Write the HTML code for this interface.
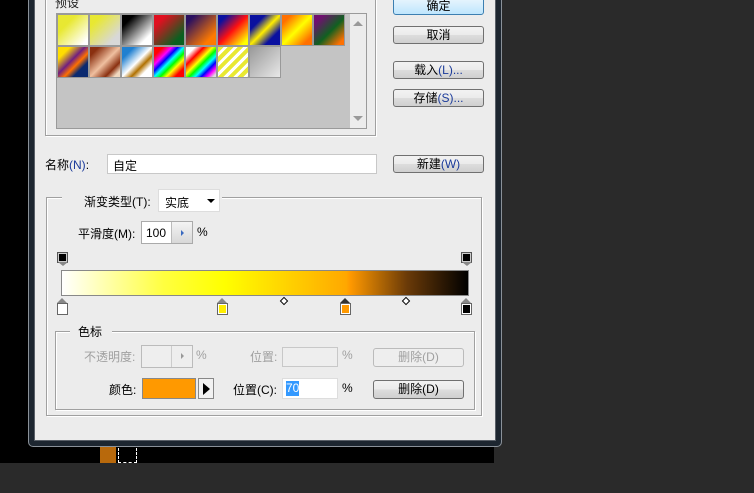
<!DOCTYPE html>
<html><head><meta charset="utf-8"><style>
*{box-sizing:border-box;margin:0;padding:0}
body{width:754px;height:493px;background:#2a2a2a;position:relative;overflow:hidden;font-family:"Liberation Sans","Noto Sans CJK SC",sans-serif;font-size:12px;color:#000}
.a{position:absolute}
.btn{position:absolute;left:393px;width:91px;height:18px;border:1px solid #707070;border-radius:3px;background:linear-gradient(#f2f2f2 0%,#ebebeb 50%,#dddddd 51%,#cfcfcf 100%);text-align:center;line-height:16px;font-size:12px}
.bl{color:#1a3a9a}
.fs{position:absolute;border:1px solid #a0a0a0;box-shadow:inset 1px 1px 0 #fff,1px 1px 0 #fff}
.sw{position:absolute;width:32px;height:32px;border:1px solid #999}
.inp{position:absolute;background:#fff;border:1px solid #c8c8c8}
.stop{position:absolute;width:11px}
</style></head><body>
<div class="a" style="left:0;top:0;width:28px;height:463px;background:#000"></div>
<div class="a" style="left:0;top:440px;width:494px;height:23px;background:#000"></div>
<div class="a" style="left:100px;top:446px;width:16px;height:17px;background:#b8690c"></div>
<div class="a" style="left:118px;top:448px;width:19px;height:15px;border:1px dashed #fff;border-top:none"></div>
<!-- dialog frame -->
<div class="a" style="left:28px;top:-5px;width:474px;height:452px;background:#1d2630;border-radius:0 0 5px 5px;border:1px solid #8a9199"></div>
<div class="a" style="left:34px;top:-5px;width:462px;height:446px;background:#ececec;border:1px solid #5a6068"></div>
<!-- preset fieldset -->
<div class="fs" style="left:45px;top:-5px;width:331px;height:141px"></div>
<div class="a" style="left:56px;top:13px;width:311px;height:116px;background:#c4c4c4;border:1px solid #9a9a9a"></div>
<div class="a" style="left:350px;top:14px;width:16px;height:114px;background:#ececec"></div>
<div class="a" style="left:353px;top:21px;width:0;height:0;border:5px solid transparent;border-bottom:5px solid #999;border-top:none"></div>
<div class="a" style="left:353px;top:116px;width:0;height:0;border:5px solid transparent;border-top:5px solid #999;border-bottom:none"></div>
<div class="sw" style="left:57px;top:14px;background:linear-gradient(135deg,#e8e832 30%,#fff 90%)"></div>
<div class="sw" style="left:89px;top:14px;background:linear-gradient(135deg,#e8e832 20%,#d8d8d8 80%)"></div>
<div class="sw" style="left:121px;top:14px;background:linear-gradient(135deg,#000 20%,#fff 80%)"></div>
<div class="sw" style="left:153px;top:14px;background:linear-gradient(135deg,#e01020 20%,#0a6020 80%)"></div>
<div class="sw" style="left:185px;top:14px;background:linear-gradient(135deg,#2a1060 15%,#ff7a00 80%)"></div>
<div class="sw" style="left:217px;top:14px;background:linear-gradient(135deg,#0a10a0 15%,#ff1010 50%,#ffff00 90%)"></div>
<div class="sw" style="left:249px;top:14px;background:linear-gradient(135deg,#0a10a0 25%,#ffee00 50%,#0a10a0 75%)"></div>
<div class="sw" style="left:281px;top:14px;background:linear-gradient(135deg,#ff7000 15%,#ffff00 50%,#ff7000 85%)"></div>
<div class="sw" style="left:313px;top:14px;background:linear-gradient(135deg,#701070 15%,#106020 55%,#ff7000 90%)"></div>
<div class="sw" style="left:57px;top:46px;background:linear-gradient(135deg,#ffdd00 20%,#702080 45%,#ff7000 60%,#0a2a70 75%)"></div>
<div class="sw" style="left:89px;top:46px;background:linear-gradient(135deg,#8a3010 15%,#f0c0a0 50%,#8a3010 75%,#f0d8c0 90%)"></div>
<div class="sw" style="left:121px;top:46px;background:linear-gradient(135deg,#2080d0 20%,#fff 50%,#b07000 65%,#fff 80%)"></div>
<div class="sw" style="left:153px;top:46px;background:linear-gradient(135deg,#f00 15%,#f0f 30%,#00f 40%,#0ff 50%,#0f0 60%,#ff0 70%,#f00 85%)"></div>
<div class="sw" style="left:185px;top:46px;background:linear-gradient(135deg,#fff 15%,#f00 30%,#ff0 45%,#0f0 55%,#0ff 65%,#00f 75%,#f0f 85%,#ddd 95%)"></div>
<div class="sw" style="left:217px;top:46px;background:repeating-linear-gradient(135deg,#e8e832 0 4px,#fff 4px 7px)"></div>
<div class="sw" style="left:249px;top:46px;background:linear-gradient(135deg,#999,#e8e8e8)"></div>
<div class="a" style="left:55px;top:-6px;font-size:12px;color:#222">预设</div>
<!-- right buttons -->
<div class="btn" style="top:-3px;border-color:#3c7fb1;background:linear-gradient(#eaf6fd,#bee6fd)">确定</div>
<div class="btn" style="top:26px">取消</div>
<div class="btn" style="top:61px">载入<span class="bl">(L)...</span></div>
<div class="btn" style="top:89px">存储<span class="bl">(S)...</span></div>
<div class="btn" style="top:155px">新建<span class="bl">(W)</span></div>
<!-- name -->
<div class="a" style="left:45px;top:156px">名称<span class="bl">(N)</span>:</div>
<div class="inp" style="left:107px;top:154px;width:270px;height:20px;padding:2px 5px">自定</div>
<!-- gradient fieldset -->
<div class="fs" style="left:46px;top:197px;width:436px;height:219px"></div>
<div class="a" style="left:62px;top:188px;width:160px;height:20px;background:#ececec"></div>
<div class="a" style="left:84px;top:193px">渐变类型(T):</div>
<div class="inp" style="left:158px;top:189px;width:62px;height:23px;padding:4px 6px;border-color:#ddd">实底</div>
<div class="a" style="left:207px;top:199px;border:4px solid transparent;border-top:4px solid #000;border-bottom:none"></div>
<div class="a" style="left:78px;top:225px">平滑度(M):</div>
<div class="inp" style="left:141px;top:221px;width:52px;height:23px;border-color:#aaa;padding:4px 4px">100</div>
<div class="a" style="left:171px;top:222px;width:21px;height:21px;background:linear-gradient(#f4f4f4,#d8d8d8);border-left:1px solid #bbb"></div>
<div class="a" style="left:181px;top:230px;border:3px solid transparent;border-left:3px solid #3a6ac0;border-right:none"></div>
<div class="a" style="left:197px;top:225px">%</div>
<!-- top stops -->
<div class="stop" style="left:57px;top:252px;height:11px;border:1px solid #555;background:#000;box-shadow:inset 0 0 0 1px #ccc"></div>
<div class="a" style="left:58px;top:262px;border:5px solid transparent;border-top:4px solid #888;border-bottom:none"></div>
<div class="stop" style="left:461px;top:252px;height:11px;border:1px solid #555;background:#000;box-shadow:inset 0 0 0 1px #ccc"></div>
<div class="a" style="left:462px;top:262px;border:5px solid transparent;border-top:4px solid #888;border-bottom:none"></div>
<!-- bar -->
<div class="a" style="left:61px;top:270px;width:408px;height:26px;border:1px solid #888;background:linear-gradient(90deg,#fff 0%,#ffff40 25%,#ffff00 40%,#ffa800 70%,#ff9900 71%,#6a3a08 85%,#000 100%)"></div>
<!-- bottom stops -->
<div class="a" style="left:57px;top:298px;border:5.5px solid transparent;border-bottom:5px solid #888;border-top:none"></div>
<div class="stop" style="left:57px;top:303px;height:12px;border:1px solid #666;background:#fff"></div>
<div class="a" style="left:217px;top:298px;border:5.5px solid transparent;border-bottom:5px solid #888;border-top:none"></div>
<div class="stop" style="left:217px;top:303px;height:12px;border:1px solid #666;background:#ffee00;box-shadow:inset 0 0 0 1px #fff"></div>
<div class="a" style="left:340px;top:298px;border:5.5px solid transparent;border-bottom:5px solid #333;border-top:none"></div>
<div class="stop" style="left:340px;top:303px;height:12px;border:1px solid #666;background:#ff9900;box-shadow:inset 0 0 0 1px #fff"></div>
<div class="a" style="left:461px;top:298px;border:5.5px solid transparent;border-bottom:5px solid #888;border-top:none"></div>
<div class="stop" style="left:461px;top:303px;height:12px;border:1px solid #666;background:#000;box-shadow:inset 0 0 0 1px #fff"></div>
<div class="a" style="left:281px;top:298px;width:6px;height:6px;border:1px solid #000;background:#fff;transform:rotate(45deg)"></div>
<div class="a" style="left:403px;top:298px;width:6px;height:6px;border:1px solid #000;background:#fff;transform:rotate(45deg)"></div>
<!-- color stops fieldset -->
<div class="fs" style="left:55px;top:331px;width:420px;height:79px"></div>
<div class="a" style="left:70px;top:322px;width:42px;height:18px;background:#ececec"></div>
<div class="a" style="left:78px;top:323px">色标</div>
<div class="a" style="left:84px;top:348px;color:#a0a0a0">不透明度:</div>
<div class="a" style="left:141px;top:345px;width:52px;height:23px;border:1px solid #bbb;background:#eee"></div>
<div class="a" style="left:171px;top:346px;width:21px;height:21px;border-left:1px solid #ccc"></div>
<div class="a" style="left:181px;top:353px;border:3px solid transparent;border-left:3px solid #999;border-right:none"></div>
<div class="a" style="left:196px;top:348px;color:#a0a0a0">%</div>
<div class="a" style="left:250px;top:348px;color:#a0a0a0">位置:</div>
<div class="a" style="left:282px;top:347px;width:56px;height:20px;border:1px solid #c8c8c8;background:#eee"></div>
<div class="a" style="left:342px;top:348px;color:#a0a0a0">%</div>
<div class="a" style="left:373px;top:348px;width:91px;height:19px;border:1px solid #bbb;border-radius:3px;background:#eee;color:#a0a0a0;text-align:center;line-height:17px">删除(D)</div>
<div class="a" style="left:109px;top:381px">颜色:</div>
<div class="a" style="left:142px;top:378px;width:54px;height:21px;border:1px solid #888;background:#ff9900"></div>
<div class="a" style="left:198px;top:378px;width:16px;height:21px;border:1px solid #888;background:#f2f2f2"></div>
<div class="a" style="left:203px;top:383px;border:6px solid transparent;border-left:7px solid #000;border-right:none"></div>
<div class="a" style="left:233px;top:381px">位置(C):</div>
<div class="inp" style="left:282px;top:378px;width:56px;height:21px;border-color:#ddd"></div>
<div class="a" style="left:286px;top:381px;background:#3399ff;color:#fff;line-height:15px">70</div>
<div class="a" style="left:342px;top:381px">%</div>
<div class="btn" style="left:373px;top:380px;height:19px;line-height:17px">删除(D)</div>
</body></html>
